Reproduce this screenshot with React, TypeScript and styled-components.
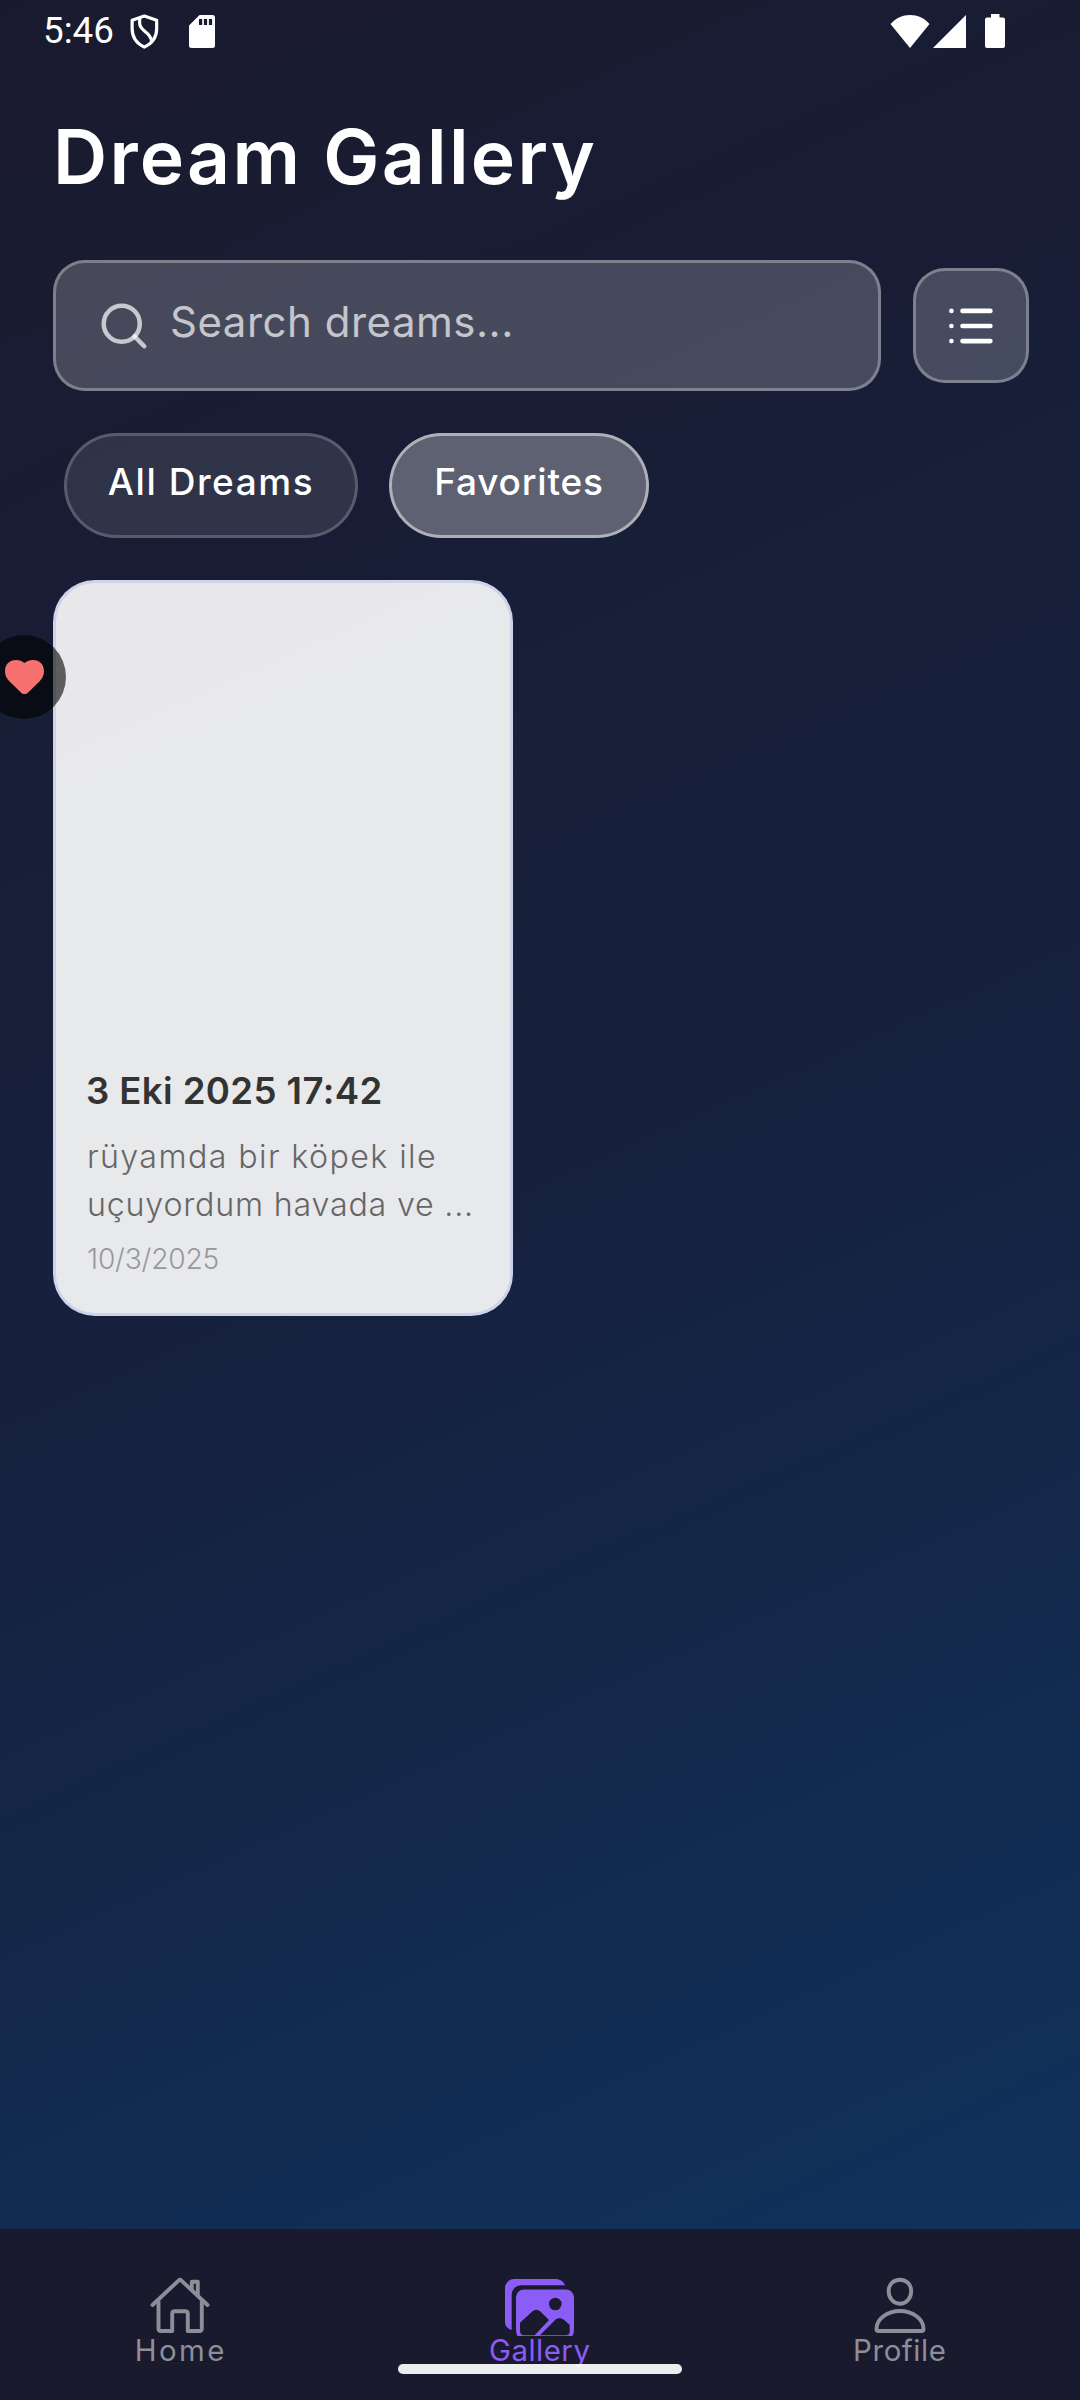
import React from "react";
import styled, { createGlobalStyle } from "styled-components";

const GlobalStyle = createGlobalStyle`
  *, *::before, *::after { box-sizing: border-box; }
  body { margin: 0; background: #1a1a2e; }
`;

const Screen = styled.div`
  width: 1080px;
  height: 2400px;
  display: flex;
  flex-direction: column;
  overflow: hidden;
  font-family: Inter, "Noto Sans", sans-serif;
  color: #fff;
  background: linear-gradient(155.8deg, #1a1a2e 0%, #16213e 50%, #0f3460 100%);
`;

const Content = styled.main`
  flex: 1;
  display: flex;
  flex-direction: column;
`;

const StatusBar = styled.div`
  height: 62px;
  padding: 0 75px 0 43px;
  display: flex;
  align-items: center;
`;

const Clock = styled.span`
  width: 87px;
  font: 400 36.75px/60px Roboto, sans-serif;
`;

const StatusIcons = styled.div<{ $end?: boolean }>`
  display: flex;
  align-items: center;
  margin-left: ${(p) => (p.$end ? "auto" : "0")};
`;

const Glyph = styled.svg<{ $gap?: number }>`
  display: block;
  flex: none;
  overflow: visible;
  margin-left: ${(p) => p.$gap ?? 0}px;
`;

const Title = styled.h1`
  margin: 0;
  padding: 48px 53px 56px;
  font-size: 75px;
  font-weight: 600;
  line-height: 94px;
  letter-spacing: 2.25px;
  white-space: nowrap;
`;

const SearchRow = styled.div`
  display: flex;
  align-items: center;
  gap: 32px;
  padding: 0 51px 0 53px;
`;

const SearchField = styled.div`
  flex: 1;
  height: 131px;
  display: flex;
  align-items: center;
  gap: 19px;
  padding-left: 41px;
  border: 3px solid rgba(255, 255, 255, 0.3);
  border-radius: 32px;
  background: rgba(255, 255, 255, 0.2);
`;

const Placeholder = styled.span`
  padding-bottom: 7px;
  font-size: 42px;
  line-height: 56px;
  letter-spacing: 0.5px;
  white-space: nowrap;
  color: rgba(255, 255, 255, 0.7);
`;

const ViewButton = styled.button`
  width: 116px;
  height: 115px;
  padding: 0;
  display: flex;
  align-items: center;
  justify-content: center;
  border: 3px solid rgba(255, 255, 255, 0.3);
  border-radius: 32px;
  background: rgba(255, 255, 255, 0.2);
`;

const Filters = styled.div`
  display: flex;
  gap: 31px;
  padding: 42px 64px 0;
`;

const Chip = styled.button<{ $active?: boolean; $width: number; $tracking: number }>`
  width: ${(p) => p.$width}px;
  height: 105px;
  padding: 0 0 7px;
  border: 3px solid rgba(255, 255, 255, ${(p) => (p.$active ? 0.5 : 0.2)});
  border-radius: 53px;
  background: rgba(255, 255, 255, ${(p) => (p.$active ? 0.3 : 0.1)});
  color: #fff;
  font: 500 37px/48px Inter, sans-serif;
  letter-spacing: ${(p) => p.$tracking}px;
  white-space: nowrap;
`;

const Grid = styled.section`
  display: flex;
  padding: 42px 53px 0;
`;

const Card = styled.article`
  position: relative;
  width: 460px;
  height: 736px;
  padding: 0 0 35px 31px;
  display: flex;
  flex-direction: column;
  justify-content: flex-end;
  border: 3px solid rgba(102, 126, 234, 0.2);
  border-radius: 42px;
  background: rgba(255, 255, 255, 0.9);
`;

const CardTitle = styled.h2`
  margin: 0 0 18px -1px;
  font-size: 36.6px;
  font-weight: 600;
  line-height: 48px;
  letter-spacing: 0.4px;
  color: #333;
  white-space: nowrap;
`;

const CardText = styled.p`
  margin: 0 0 11px;
  font-size: 32.2px;
  font-weight: 350;
  line-height: 48px;
  color: #666;
  white-space: nowrap;
`;

const TextLine = styled.span<{ $tracking: number }>`
  display: block;
  letter-spacing: ${(p) => p.$tracking}px;
`;

const CardDate = styled.time`
  font-size: 28.2px;
  font-weight: 350;
  line-height: 38px;
  letter-spacing: -0.2px;
  color: #999;
`;

const Favorite = styled.div`
  position: absolute;
  left: -74px;
  top: 52px;
  width: 84px;
  height: 84px;
  display: flex;
  align-items: center;
  justify-content: center;
  border-radius: 50%;
  background: rgba(0, 0, 0, 0.6);
`;

const TabBar = styled.nav`
  position: relative;
  height: 171px;
  flex: none;
  display: grid;
  grid-template-columns: repeat(3, 1fr);
  background: #1a1a2e;
`;

const Tab = styled.div<{ $active?: boolean }>`
  padding: 43px 1px 0 0;
  display: flex;
  flex-direction: column;
  align-items: center;
  color: ${(p) => (p.$active ? "#8b5cf6" : "#8e8e98")};
`;

const TabLabel = styled.span<{ $tracking: number }>`
  margin: -4px -${(p) => p.$tracking}px 0 0;
  font-size: 29.4px;
  line-height: 34px;
  letter-spacing: ${(p) => p.$tracking}px;
`;

const HomeHandle = styled.div`
  position: absolute;
  left: 398px;
  bottom: 26px;
  width: 284px;
  height: 10px;
  border-radius: 5px;
  background: rgba(255, 255, 255, 0.92);
`;

export default function App() {
  return (
    <Screen>
      <GlobalStyle />
      <Content>
        <StatusBar>
          <Clock>5:46</Clock>
          <StatusIcons>
            <Glyph width="29" height="35" viewBox="0 0 30 36" fill="none" stroke="#fff" strokeWidth="3.300" strokeLinejoin="round">
              <path d="M14.800 2L2.200 6.300V15C2.200 24 7.500 30.800 14.800 34.200C22.200 30.800 27.600 24 27.600 15V6.300Z" />
              <path d="M10 4V9.500C10 18 20.500 17 22.500 28" />
            </Glyph>
            <Glyph $gap={30} width="26" height="33" viewBox="0 0 26 33">
              <path fillRule="evenodd" fill="#fff" d="M10.500 0H23.500A2.500 2.500 0 0 1 26 2.500V30.500A2.500 2.500 0 0 1 23.500 33H2.500A2.500 2.500 0 0 1 0 30.500V10.500ZM10 4V10H13.200V4ZM14.900 4V10H18.100V4ZM19.900 4V10H23.100V4Z" />
            </Glyph>
          </StatusIcons>
          <StatusIcons $end>
            <Glyph width="40" height="33" viewBox="0 0 40 33" fill="#fff">
              <path d="M0.500 9C6 3 12.500 0 20 0S34.500 3 39.500 9L20 33Z" />
            </Glyph>
            <Glyph $gap={3} width="33" height="33" viewBox="0 0 33 33" fill="#fff">
              <path d="M33 0V33H0Z" />
            </Glyph>
            <Glyph $gap={19} width="20" height="34" viewBox="0 0 20 34" fill="#fff">
              <path d="M6 0H14.500V3.500H18a2 2 0 0 1 2 2V32a2 2 0 0 1-2 2H2a2 2 0 0 1-2-2V5.500a2 2 0 0 1 2-2H6Z" />
            </Glyph>
          </StatusIcons>
        </StatusBar>

        <Title>Dream Gallery</Title>

        <SearchRow>
          <SearchField>
            <Glyph width="54" height="54" viewBox="0 0 24 24" fill="none" stroke="rgba(255,255,255,0.7)" strokeWidth="2" strokeLinecap="round">
              <circle cx="11" cy="11" r="8" />
              <path d="M21 21 16.650 16.650" />
            </Glyph>
            <Placeholder>Search dreams...</Placeholder>
          </SearchField>
          <ViewButton aria-label="List view">
            <Glyph width="44" height="36" viewBox="0 0 44 36" stroke="#fff" strokeWidth="4.600" strokeLinecap="round">
              <path d="M13.500 2.900H41.400M13.500 18H41.400M13.500 33.100H41.400M2.400 2.900h.01M2.400 18h.01M2.400 33.100h.01" />
            </Glyph>
          </ViewButton>
        </SearchRow>

        <Filters>
          <Chip $width={294} $tracking={1.55}>All Dreams</Chip>
          <Chip $width={260} $tracking={0.8} $active>Favorites</Chip>
        </Filters>

        <Grid>
          <Card>
            <Favorite>
              <Glyph width="39" height="34" viewBox="0 0 38.800 35.200" preserveAspectRatio="none" fill="#f87171">
                <path d="M19.400 3.100C17 1 14 0 11 0C4.500 0 0 4.500 0 11.500C0 16 1.500 19 4.500 22.300L15.800 33.600C18 35.800 20.800 35.800 23 33.600L34.300 22.300C37.300 19 38.800 16 38.800 11.500C38.800 4.500 34.300 0 27.800 0C24.800 0 21.800 1 19.400 3.100Z" />
              </Glyph>
            </Favorite>
            <CardTitle>3 Eki 2025 17:42</CardTitle>
            <CardText>
              <TextLine $tracking={1.4}>rüyamda bir köpek ile</TextLine>
              <TextLine $tracking={0.8}>uçuyordum havada ve ...</TextLine>
            </CardText>
            <CardDate>10/3/2025</CardDate>
          </Card>
        </Grid>
      </Content>

      <TabBar>
        <Tab>
          <Glyph width="66" height="66" viewBox="0 0 66 66" fill="none" stroke="currentColor" strokeWidth="3.900" strokeLinecap="round" strokeLinejoin="round">
            <path d="M5.500 33 31.800 8.300Q33 7.300 34.200 8.300L60.500 33" />
            <path d="M11.500 29.500V56.500Q11.500 59 14 59H25.200V42Q25.200 39.300 27.900 39.300H38.100Q40.800 39.300 40.800 42V59H52.300Q54.800 59 54.800 56.500V29.500" />
            <path d="M44.800 17V9.700H50.800V23" />
          </Glyph>
          <TabLabel $tracking={2.4}>Home</TabLabel>
        </Tab>
        <Tab $active>
          <Glyph width="72" height="66" viewBox="0 0 72 66" fill="currentColor">
            <path d="M7.700 58C3.500 56.800 1 54 1 50V16a9 9 0 0 1 9-9H51C56 7 60 9.500 61 13.300H17a9.300 9.300 0 0 0-9.300 9.300Z" />
            <path fillRule="evenodd" d="M20 17.500H62a8 8 0 0 1 8 8V57.500Q70 62 68.500 64H13.500Q12 62 12 57.500V25.500a8 8 0 0 1 8-8ZM51.300 25.700a6.300 6.300 0 1 0 0 12.600a6.300 6.300 0 1 0 0-12.600ZM16 50.700V58.500Q16 63.200 20 63.200H30.700L45 48L36.500 39.500Q32.500 36 28.500 39.200ZM36 63.200H62Q65.700 63.200 65.700 59.500V52.700L59.500 47.500Q55.500 44.500 51.500 47.500Z" />
          </Glyph>
          <TabLabel $tracking={0.5}>Gallery</TabLabel>
        </Tab>
        <Tab>
          <Glyph width="66" height="66" viewBox="0 0 66 66" fill="none" stroke="currentColor" strokeWidth="3.900" strokeLinejoin="round">
            <path d="M33 7.700C39.500 7.700 44.200 12.500 44.200 19C44.200 26 39.500 31.700 33 31.700S21.600 26 21.600 19C21.600 12.500 26.500 7.700 33 7.700Z" />
            <path d="M9.500 57C9.500 47 20 39 33 39S56.500 47 56.500 57Q56.500 59 54.500 59H11.500Q9.500 59 9.500 57Z" />
          </Glyph>
          <TabLabel $tracking={0.6}>Profile</TabLabel>
        </Tab>
        <HomeHandle />
      </TabBar>
    </Screen>
  );
}
